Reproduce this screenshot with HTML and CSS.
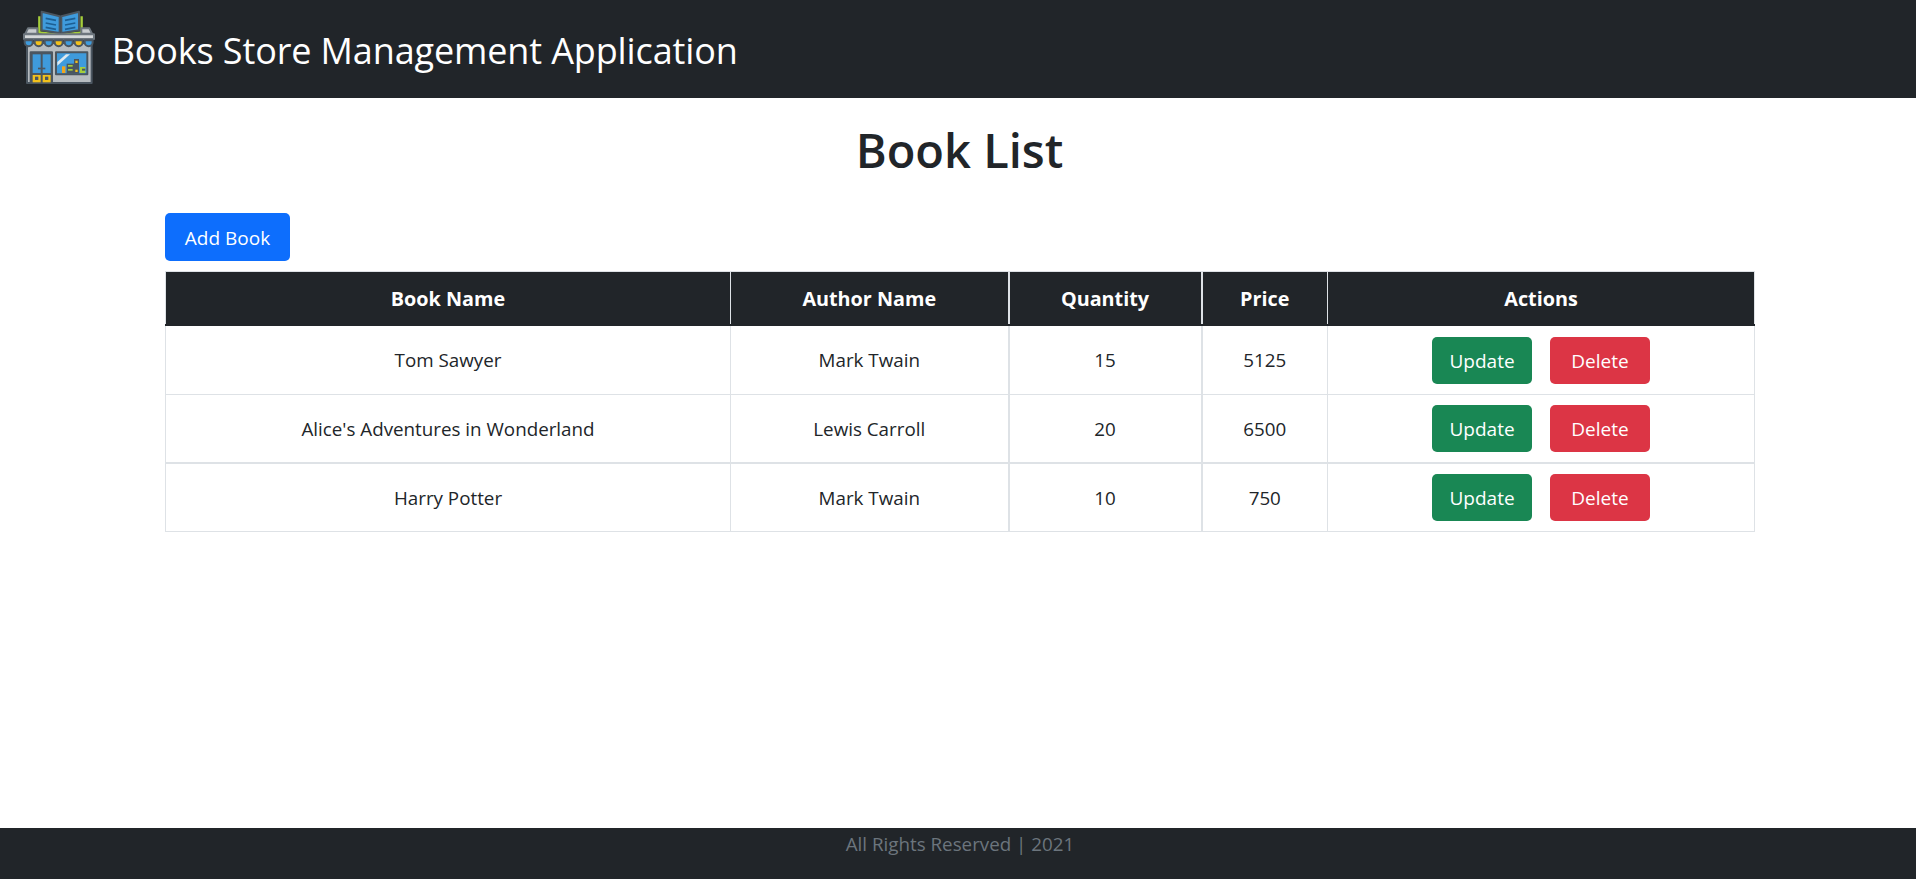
FILE: index.html
```html
<!DOCTYPE html>
<html lang="en">
<head>
    <meta charset="UTF-8">
    <meta name="viewport" content="width=device-width, initial-scale=1.0">
    <title>Books Store Management Application</title>
    <link rel="stylesheet" href="styles.css">
</head>
<body>
    <!-- Top bar -->
    <header class="navbar">
        <svg class="logo" viewBox="66 26 224 230" aria-hidden="true">
            <g stroke="#4b5660" stroke-width="6" stroke-linejoin="round">
                <!-- book -->
                <path d="M118 48V96L181 104L245 96V48" fill="none" stroke="#a6cf3b" stroke-width="7"/>
                <path d="M125 34L179 48V98L125 90Z" fill="#3f9bdc"/>
                <path d="M184 48L237 34V90L184 98Z" fill="#3f9bdc"/>
                <path d="M137 54L168 60M137 68L168 74M137 81L168 87M195 60L226 54M195 74L226 68M195 87L226 81" stroke="#1d5f93" stroke-width="5" fill="none"/>
                <!-- roof -->
                <path d="M84 84H112V100H76Z" fill="#c9cdd0" stroke="#6d767e"/>
                <path d="M244 84H268L276 100H244Z" fill="#c9cdd0" stroke="#6d767e"/>
                <!-- building -->
                <rect x="81" y="128" width="194" height="120" fill="#b7bcc0"/>
                <rect x="72" y="102" width="210" height="14" fill="#d5d8da" stroke="#6d767e"/>
                <!-- awning -->
                <path d="M74 120H98V126A12 12 0 0 1 74 126Z" fill="#3f9bdc"/>
                <path d="M104 120H128V126A12 12 0 0 1 104 126Z" fill="#f2c11c"/>
                <path d="M134 120H158V126A12 12 0 0 1 134 126Z" fill="#3f9bdc"/>
                <path d="M164 120H188V126A12 12 0 0 1 164 126Z" fill="#f2c11c"/>
                <path d="M194 120H218V126A12 12 0 0 1 194 126Z" fill="#3f9bdc"/>
                <path d="M224 120H248V126A12 12 0 0 1 224 126Z" fill="#f2c11c"/>
                <path d="M254 120H278V126A12 12 0 0 1 254 126Z" fill="#3f9bdc"/>
                <!-- door -->
                <rect x="92" y="156" width="64" height="92" fill="#4b5660"/>
                <rect x="98" y="162" width="24" height="56" fill="#3f9bdc" stroke="none"/>
                <rect x="128" y="162" width="24" height="56" fill="#3f9bdc" stroke="none"/>
                <rect x="114" y="202" width="22" height="5" fill="#4b5660" stroke="none"/>
                <rect x="98" y="224" width="24" height="22" fill="#f2c11c" stroke="none"/>
                <rect x="128" y="224" width="24" height="22" fill="#f2c11c" stroke="none"/>
                <rect x="105" y="229" width="10" height="10" fill="#4b5660" stroke="none"/>
                <rect x="135" y="229" width="10" height="10" fill="#4b5660" stroke="none"/>
                <!-- window -->
                <rect x="168" y="156" width="94" height="66" fill="#3f9bdc"/>
                <path d="M172 185L198 162H210L172 196Z" fill="#dfe9ef" stroke="none"/>
                <rect x="186" y="198" width="10" height="20" fill="#f2a51c" stroke="none"/>
                <rect x="200" y="190" width="22" height="30" fill="#4b5660" stroke="none"/>
                <rect x="204" y="194" width="14" height="5" fill="#a6cf3b" stroke="none"/>
                <rect x="204" y="206" width="14" height="5" fill="#a6cf3b" stroke="none"/>
                <rect x="222" y="176" width="15" height="44" fill="#4b5660" stroke="none"/>
                <rect x="226" y="181" width="7" height="7" fill="#f2c11c" stroke="none"/>
                <rect x="226" y="208" width="7" height="7" fill="#f2c11c" stroke="none"/>
                <rect x="240" y="200" width="16" height="18" fill="#a6cf3b" stroke="none"/>
                <rect x="246" y="205" width="10" height="6" fill="#4b5660" stroke="none"/>
            </g>
        </svg>
        <span class="brand">Books Store Management Application</span>
    </header>

    <main class="content">
        <h1 class="page-title">Book List</h1>
        <button class="btn btn-add">Add Book</button>

        <table class="book-table">
            <colgroup>
                <col class="col-book">
                <col class="col-author">
                <col class="col-qty">
                <col class="col-price">
                <col class="col-actions">
            </colgroup>
            <thead>
                <tr>
                    <th>Book Name</th>
                    <th>Author Name</th>
                    <th>Quantity</th>
                    <th>Price</th>
                    <th>Actions</th>
                </tr>
            </thead>
            <tbody>
                <tr class="row-first">
                    <td>Tom Sawyer</td>
                    <td>Mark Twain</td>
                    <td>15</td>
                    <td>5125</td>
                    <td class="actions">
                        <button class="btn btn-update">Update</button>
                        <button class="btn btn-delete">Delete</button>
                    </td>
                </tr>
                <tr class="row-thick">
                    <td>Alice's Adventures in Wonderland</td>
                    <td>Lewis Carroll</td>
                    <td>20</td>
                    <td>6500</td>
                    <td class="actions">
                        <button class="btn btn-update">Update</button>
                        <button class="btn btn-delete">Delete</button>
                    </td>
                </tr>
                <tr>
                    <td>Harry Potter</td>
                    <td>Mark Twain</td>
                    <td>10</td>
                    <td>750</td>
                    <td class="actions">
                        <button class="btn btn-update">Update</button>
                        <button class="btn btn-delete">Delete</button>
                    </td>
                </tr>
            </tbody>
        </table>
    </main>

    <footer class="footer">All Rights Reserved | 2021</footer>
</body>
</html>
```

FILE: styles.css
```css
/* Page frame */
* {
    box-sizing: border-box;
}

body {
    margin: 0;
    height: 879px;
    display: flex;
    flex-direction: column;
    background: #fff;
    color: #212529;
    font-family: "Open Sans", "Noto Sans", sans-serif;
    font-size: 18.8px;
    overflow: hidden;
}

/* Top bar */
.navbar {
    height: 98px;
    display: flex;
    align-items: center;
    gap: 15px;
    padding: 0 0 0 22px;
    background: #212529;
}

.logo {
    width: 74.67px;
    height: 76.67px;
    margin-top: -4px;
    filter: blur(0.4px);
}

.brand {
    color: #fff;
    font-size: 36px;
    letter-spacing: -0.13px;
    margin-top: 2px;
}

/* Main content */
.content {
    flex: 1;
    width: 1589px;
    margin-left: 165px;
}

.page-title {
    margin: 0;
    padding-top: 19px;
    height: 115px;
    text-align: center;
    font-size: 47px;
    font-weight: 600;
    line-height: 66px;
}

.btn {
    display: inline-block;
    width: 100px;
    height: 47px;
    border: none;
    border-radius: 5px;
    color: #fff;
    font-family: inherit;
    font-size: 19px;
    padding: 1px 0 0;
}

.btn-add {
    display: block;
    width: 125px;
    height: 48px;
    background: #0d6efd;
}

.btn-update {
    background: #198754;
}

.btn-delete {
    background: #dc3545;
    margin-left: 13px;
}

/* Table */
.book-table {
    width: 100%;
    margin-top: 10px;
    table-layout: fixed;
    border-collapse: collapse;
}

.col-book { width: 565px; }
.col-author { width: 278px; }
.col-qty { width: 193px; }
.col-price { width: 126px; }
.col-actions { width: 427px; }

.book-table th {
    height: 53.5px;
    padding: 0;
    background: #212529;
    color: #fff;
    font-size: 19.8px;
    font-weight: 700;
    border: 1px solid #dee2e6;
    border-bottom: 2px solid #212529;
}

.book-table td {
    height: 68.5px;
    padding: 0;
    text-align: center;
    border: 1px solid #dee2e6;
}

.book-table .row-first td {
    height: 69.5px;
}

/* these two column lines and one row line render 2px wide */
.book-table th:nth-child(3),
.book-table td:nth-child(3),
.book-table th:nth-child(4),
.book-table td:nth-child(4) {
    border-left-width: 2px;
}

.row-thick td {
    border-bottom-width: 2px;
}

.actions {
    white-space: nowrap;
}

/* Footer */
.footer {
    height: 51px;
    padding: 2px 0 0 4px;
    background: #212529;
    color: #6c757d;
    text-align: center;
    line-height: 28px;
}
```
